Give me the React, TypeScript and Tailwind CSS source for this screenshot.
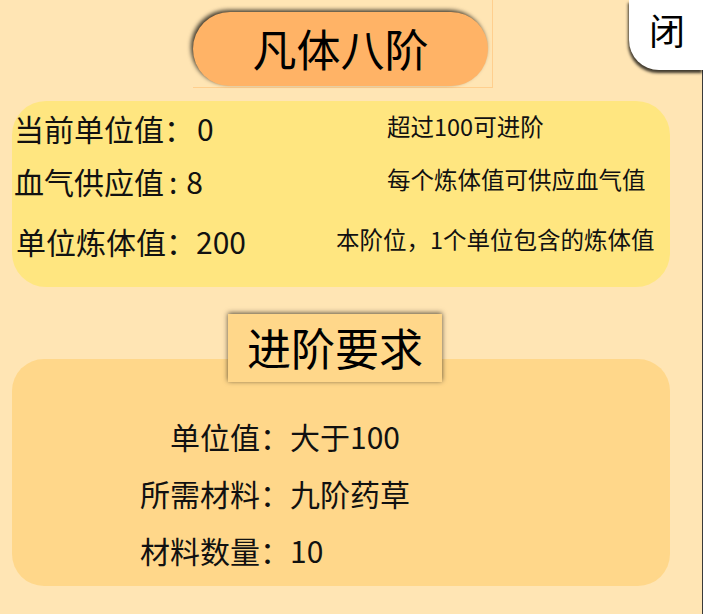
const font = { fontFamily: '"Noto Sans CJK SC", "Noto Sans", sans-serif' };

function StatRow({
  label,
  value,
  note,
  leftWidth,
  height,
  padLeft,
}: {
  label: React.ReactNode;
  value: React.ReactNode;
  note: string;
  leftWidth: string;
  height: string;
  padLeft: string;
}) {
  return (
    <div className={`flex items-center ${height} ${padLeft}`}>
      <div className={`flex items-center shrink-0 ${leftWidth} text-[30px] leading-[40px]`}>
        {label}
        {value}
      </div>
      <span className="text-[23.5px] leading-[32px] mb-[4px] whitespace-nowrap">{note}</span>
    </div>
  );
}

function ReqRow({ label, value }: { label: string; value: string }) {
  return (
    <div className="grid grid-cols-[278px_1fr] h-[57px] items-center text-[30px] leading-[40px]">
      <span className="text-right">{label}</span>
      <span>{value}</span>
    </div>
  );
}

export default function App() {
  return (
    <div
      className="relative min-h-screen w-full bg-[#FFE5B4] text-[#111] border-r border-[#3a3a3a]"
      style={font}
    >
      {/* close button */}
      <button className="absolute top-0 right-[-1px] w-[74px] h-[70px] bg-white rounded-bl-[30px] shadow-[-1px_3px_3px_rgba(0,0,0,0.75)] flex items-center justify-center pl-[2px] pb-[12px] text-[36px] leading-none text-black">
        闭
      </button>

      <div className="w-[670px] pl-[12px] flex flex-col">
        {/* title */}
        <div className="ml-[181px] w-[300px] pt-[12px] pb-[1px] border-r border-b border-[#FFCF8E]">
          <div className="w-[295px] h-[74px] rounded-full bg-[#FFB366] shadow-[-2px_-2px_4px_rgba(0,0,0,0.75)] flex items-center justify-center text-[44px] leading-none text-black pb-[2px]">
            凡体八阶
          </div>
        </div>

        {/* current stats */}
        <div className="mt-[13px] h-[186px] rounded-[34px] bg-[#FFE680] pt-[7px] pl-[2px]">
          <StatRow
            label={<span>当前单位值：</span>}
            value={<span className="ml-[3px]">0</span>}
            note="超过100可进阶"
            leftWidth="w-[373px]"
            height="h-[40px]"
            padLeft=""
          />
          <StatRow
            label={
              <>
                <span>血气供应值</span>
                <span className="ml-[5px]">:</span>
              </>
            }
            value={<span className="ml-[9px]">8</span>}
            note="每个炼体值可供应血气值"
            leftWidth="w-[373px]"
            height="h-[66px]"
            padLeft=""
          />
          <StatRow
            label={<span>单位炼体值：</span>}
            value={<span>200</span>}
            note="本阶位，1个单位包含的炼体值"
            leftWidth="w-[320px]"
            height="h-[54px]"
            padLeft="pl-[2px]"
          />
        </div>

        {/* requirements */}
        <div className="mt-[27px] ml-[216px] w-[214px] h-[68px] relative z-10 -mb-[23px] bg-[#FFD78A] shadow-[0_-1px_5px_rgba(0,0,0,0.65)] flex items-center justify-center text-[44px] leading-none text-black pb-[2px]">
          进阶要求
        </div>
        <div className="h-[227px] rounded-[32px] bg-[#FFD78A] pt-[48px]">
          <ReqRow label="单位值：" value="大于100" />
          <ReqRow label="所需材料：" value="九阶药草" />
          <ReqRow label="材料数量：" value="10" />
        </div>
      </div>
    </div>
  );
}
